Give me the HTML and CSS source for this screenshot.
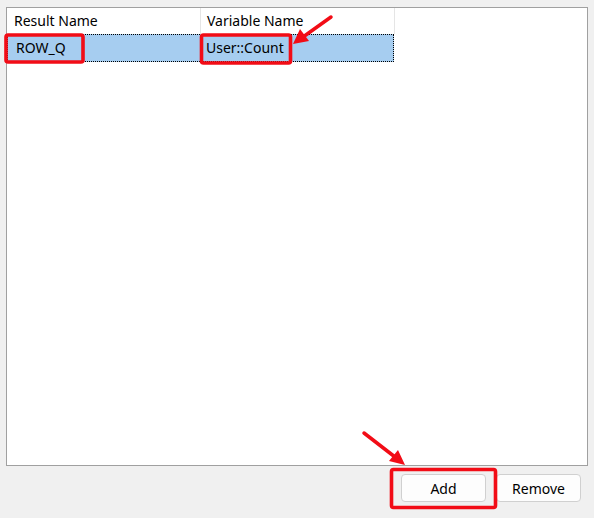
FILE: index.html
```html
<!DOCTYPE html>
<html>
<head>
<meta charset="utf-8">
<link rel="stylesheet" href="styles.css">
</head>
<body>
<div class="dialog">
  <div class="list">
    <div class="header">
      <div class="hcell c1">Result Name</div>
      <div class="hcell c2">Variable Name</div>
    </div>
    <div class="row selected">
      <div class="cell c1">ROW_Q</div>
      <div class="cell c2">User::Count</div>
    </div>
  </div>
  <div class="buttons">
    <button class="btn">Add</button>
    <button class="btn">Remove</button>
  </div>
</div>
<svg class="overlay" width="594" height="518" viewBox="0 0 594 518">
  <rect x="6" y="35" width="77" height="27" rx="2" fill="none" stroke="#f20c16" stroke-width="3.6"/>
  <rect x="201.5" y="35" width="89" height="28" rx="2" fill="none" stroke="#f20c16" stroke-width="3.6"/>
  <rect x="391.5" y="469.5" width="104" height="38" rx="2" fill="none" stroke="#f20c16" stroke-width="3.6"/>
  <line x1="331" y1="17" x2="303" y2="37" stroke="#f20c16" stroke-width="3.5" stroke-linecap="round"/>
  <polygon points="293,44 309,41 300,29" fill="#f20c16"/>
  <line x1="364" y1="433" x2="395" y2="457" stroke="#f20c16" stroke-width="3.5" stroke-linecap="round"/>
  <polygon points="405,465 389,461 398,450" fill="#f20c16"/>
</svg>
</body>
</html>
```
FILE: styles.css
```css
html, body {
  margin: 0;
  padding: 0;
  background: #f0f0f0;
  width: 594px;
  height: 518px;
  overflow: hidden;
  font-family: "Noto Sans", "Open Sans", sans-serif;
  font-size: 14px;
  color: #000;
}
.dialog {
  padding: 7px 6px 0 6px;
  display: flex;
  flex-direction: column;
}
.list {
  width: 580px;
  height: 457px;
  background: #fff;
  border: 1px solid #a0a0a0;
}
.header {
  display: flex;
  height: 26px;
}
.hcell {
  box-sizing: border-box;
  width: 194px;
  padding-left: 7px;
  line-height: 26px;
  border-right: 1px solid #e5e5e5;
}
.hcell.c2 {
  padding-left: 6px;
}
.row {
  display: flex;
  width: 387px;
  height: 28px;
  box-sizing: border-box;
}
.row.selected {
  background: #a6cdf0;
  border: 1px dotted #000;
}
.cell {
  box-sizing: border-box;
  line-height: 26px;
}
.cell.c1 {
  width: 193px;
  padding-left: 8px;
}
.cell.c2 {
  padding-left: 5px;
}
.buttons {
  display: flex;
  justify-content: flex-end;
  gap: 10px;
  margin-top: 8px;
  padding-right: 7px;
}
.btn {
  width: 85px;
  height: 28px;
  background: #fdfdfd;
  border: 1px solid #d0d0d0;
  border-radius: 4px;
  font-family: "Noto Sans", "Open Sans", sans-serif;
  font-size: 14px;
  color: #000;
  padding: 0;
}
.overlay {
  position: absolute;
  left: 0;
  top: 0;
  pointer-events: none;
}
```
